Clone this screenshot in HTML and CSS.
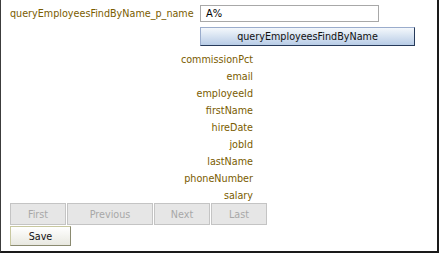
FILE: index.html
```html
<!DOCTYPE html>
<html>
<head>
<meta charset="utf-8">
<link rel="stylesheet" href="styles.css">
</head>
<body>
<div class="frame">
  <div class="query">
    <label class="qlabel">queryEmployeesFindByName_p_name</label>
    <div class="qfields">
      <div class="input">A%</div>
      <button class="qbtn">queryEmployeesFindByName</button>
    </div>
  </div>
  <div class="fields">
    <div class="field">commissionPct</div>
    <div class="field">email</div>
    <div class="field">employeeId</div>
    <div class="field">firstName</div>
    <div class="field">hireDate</div>
    <div class="field">jobId</div>
    <div class="field">lastName</div>
    <div class="field">phoneNumber</div>
    <div class="field">salary</div>
  </div>
  <div class="nav">
    <button class="navbtn w-first">First</button>
    <button class="navbtn w-prev">Previous</button>
    <button class="navbtn w-next">Next</button>
    <button class="navbtn w-last">Last</button>
  </div>
  <button class="save">Save</button>
</div>
</body>
</html>
```
FILE: styles.css
```css
html, body {
  margin: 0;
  padding: 0;
  background: #ffffff;
}
.frame {
  box-sizing: border-box;
  width: 439px;
  height: 253px;
  border-left: 1px solid #3c3c3c;
  border-right: 2px solid #1a1a1a;
  border-bottom: 2px solid #1a1a1a;
  padding: 5px 0 0 9px;
  font-family: "DejaVu Sans Condensed", "Liberation Sans", sans-serif;
  font-size: 10.7px;
}
.query {
  display: flex;
  align-items: flex-start;
}
.qlabel {
  color: #7a5c00;
  width: 190px;
  padding-top: 2px;
  line-height: 14px;
}
.qfields {
  display: flex;
  flex-direction: column;
  gap: 5px;
}
.input {
  box-sizing: border-box;
  width: 179px;
  height: 17px;
  border: 1px solid #a8a8a8;
  padding: 1px 5px;
  color: #000;
  line-height: 13px;
  font-size: 11px;
}
.qbtn {
  box-sizing: border-box;
  width: 215px;
  height: 19px;
  border: 1px solid #263a5a;
  border-top-color: #9aaccc;
  border-left-color: #9aaccc;
  background: linear-gradient(#f4f8fc, #b8cce6);
  font-family: inherit;
  font-size: 10.7px;
  color: #111;
  padding: 0;
}
.fields {
  width: 243px;
  display: flex;
  flex-direction: column;
  align-items: flex-end;
  padding-top: 5px;
  padding-bottom: 0;
}
.field {
  color: #7a5c00;
  height: 17px;
  line-height: 17px;
}
.field:last-child {
  height: 16px;
}
.nav {
  display: flex;
  gap: 1px;
}
.navbtn {
  box-sizing: border-box;
  height: 22px;
  border: 1px solid #c4c4c4;
  background: #e6e6e6;
  color: #a8a8a8;
  font-family: inherit;
  font-size: 10.7px;
  padding: 0;
}
.w-first { width: 56px; }
.w-prev { width: 86px; }
.w-next { width: 56px; }
.w-last { width: 56px; }
.save {
  display: block;
  box-sizing: border-box;
  margin-top: 1px;
  width: 61px;
  height: 20px;
  border: 1px solid #c8c8a0;
  border-right-color: #8a8a70;
  border-bottom-color: #8a8a70;
  background: linear-gradient(#ffffff, #e8e8e0);
  font-family: inherit;
  font-size: 10.7px;
  color: #111;
  padding: 0;
}
```
